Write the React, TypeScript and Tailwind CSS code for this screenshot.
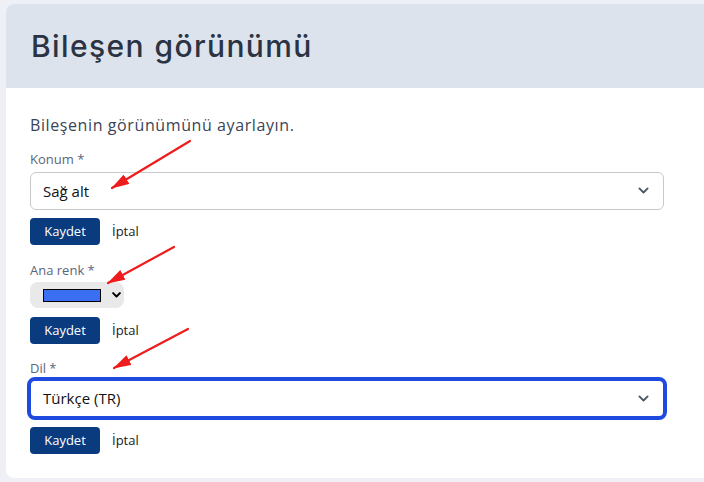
import React from "react";

const font = { fontFamily: '"Open Sans", "Liberation Sans", sans-serif' };
const titleFont = { fontFamily: 'Inter, "Open Sans", sans-serif' };

const Chevron = ({ className, w = 12, sw = 2 }: { className?: string; w?: number; sw?: number }) => (
  <svg width={w} height={w * 0.67} viewBox="0 0 12 8" className={className}>
    <path d="M1.5 1.5 L6 6 L10.5 1.5" fill="none" stroke="currentColor" strokeWidth={sw} strokeLinecap="round" strokeLinejoin="round" />
  </svg>
);

const Actions = ({ className }: { className?: string }) => (
  <div className={`flex items-center gap-3 ${className ?? ""}`}>
    <button className="h-[27px] w-[70px] rounded bg-[#0b3b7f] text-[13px] text-white">Kaydet</button>
    <span className="text-[13px] text-[#1a1a1a]">İptal</span>
  </div>
);

const Arrows = () => (
  <svg className="pointer-events-none absolute left-0 top-0" width="704" height="482">
    <defs>
      <marker id="head" markerWidth="18" markerHeight="11" refX="17" refY="5.5" orient="auto" markerUnits="userSpaceOnUse">
        <path d="M0 0 L18 5.5 L0 11 Z" fill="#ee1c1c" />
      </marker>
    </defs>
    <g stroke="#ee1c1c" strokeWidth="2.2" strokeLinecap="round">
      <line x1="190" y1="141" x2="112" y2="188" markerEnd="url(#head)" />
      <line x1="174" y1="247" x2="108" y2="283" markerEnd="url(#head)" />
      <line x1="188" y1="329" x2="114" y2="368" markerEnd="url(#head)" />
    </g>
  </svg>
);

export default function App() {
  return (
    <div className="relative h-[482px] w-[704px] overflow-hidden bg-[#eef0f6]" style={font}>
      <div className="ml-[6px] mt-[4px] w-[720px] overflow-hidden rounded-lg bg-white">
        {/* Header */}
        <div className="flex h-[84px] items-center bg-[#dde3ec] px-[25px]">
          <h1 className="text-[30px] font-medium tracking-[1.4px] text-[#2a3343]" style={titleFont}>
            Bileşen görünümü
          </h1>
        </div>

        {/* Body */}
        <div className="w-[640px] px-[24px] pb-[24px] pt-[25px]">
          <p className="text-[16px] leading-6 tracking-[0.6px] text-[#3a4457]">Bileşenin görünümünü ayarlayın.</p>

          <label className="mt-[13px] block text-[13px] leading-[18px] text-[#5b6579]">Konum *</label>
          <div className="mt-[4px] flex h-[38px] w-[634px] items-center justify-between rounded-md border border-[#c9c9c9] pl-[12px] pr-[14px]">
            <span className="text-[15px] text-[#111]">Sağ alt</span>
            <Chevron className="text-[#4b5566]" w={11} />
          </div>
          <Actions className="mt-[8px]" />

          <label className="mt-[16px] block text-[13px] leading-[18px] text-[#5b6579]">Ana renk *</label>
          <div className="mt-[3px] flex h-[26px] w-[94px] items-center gap-[11px] rounded-lg bg-[#e9e9ea] pl-[13px]">
            <div className="h-[13px] w-[58px] border border-black bg-[#3a6ff2]" />
            <Chevron className="text-black" w={9} sw={2.6} />
          </div>
          <Actions className="mt-[9px]" />

          <label className="mt-[15px] block text-[13px] leading-[18px] text-[#5b6579]">Dil *</label>
          <div className="-ml-[3px] flex h-[43px] w-[640px] items-center justify-between rounded-lg border-4 border-[#1f4ae0] pl-[12px] pr-[14px]">
            <span className="text-[15px] text-[#111]">Türkçe (TR)</span>
            <Chevron className="text-[#4b5566]" w={11} />
          </div>
          <Actions className="mt-[7px]" />
        </div>
      </div>
      <Arrows />
    </div>
  );
}
